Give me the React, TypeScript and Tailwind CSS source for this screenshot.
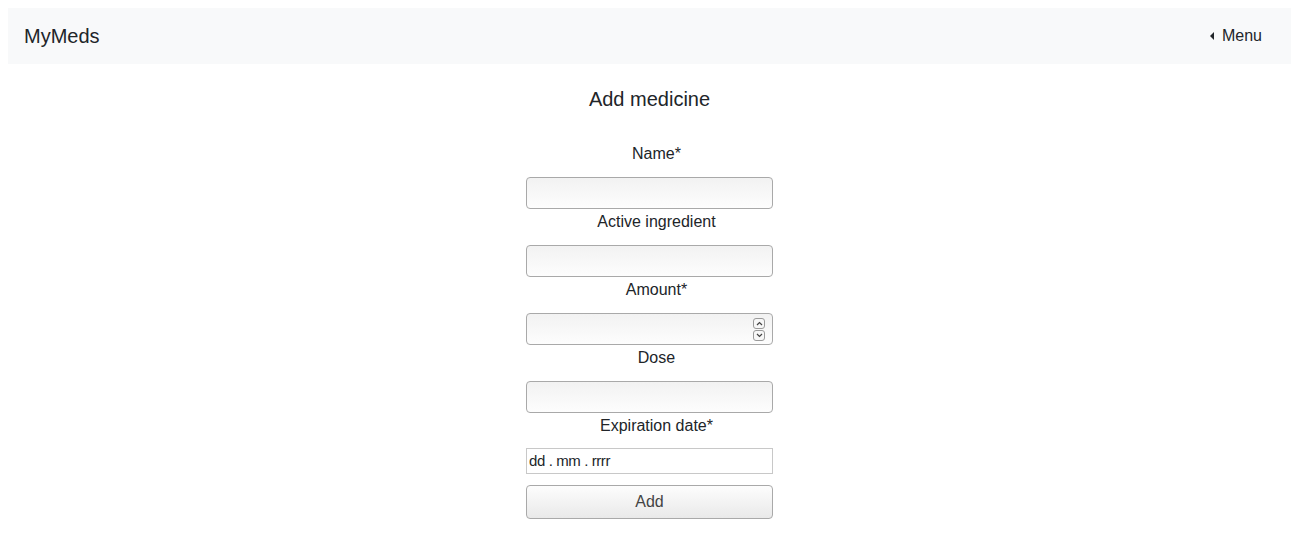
const font = { fontFamily: '"Liberation Sans", Arial, sans-serif' };

function Field({ label, children }: { label: string; children: React.ReactNode }) {
  return (
    <div className="flex flex-col items-center">
      <label className="text-base leading-6 pt-px mb-[11px] pl-[14px] text-[#212529]">{label}</label>
      {children}
    </div>
  );
}

function TextBox({ spinner }: { spinner?: boolean }) {
  return (
    <div className="relative w-[247px] h-8 rounded-[4px] border border-[#a9a9a9] bg-gradient-to-b from-[#f2f2f2] to-[#fdfdfd]">
      {spinner && (
        <div className="absolute right-[7px] top-[4px] flex flex-col gap-px">
          <Spin dir="up" />
          <Spin dir="down" />
        </div>
      )}
    </div>
  );
}

function Spin({ dir }: { dir: 'up' | 'down' }) {
  return (
    <div className="w-[12px] h-[11px] rounded-[3px] border border-[#9a9a9a] bg-[#f7f7f7] flex items-center justify-center">
      <svg width="7" height="5" viewBox="0 0 7 5">
        <path
          d={dir === 'up' ? 'M1 4 L3.5 1.5 L6 4' : 'M1 1 L3.5 3.5 L6 1'}
          fill="none"
          stroke="#444"
          strokeWidth="1.2"
        />
      </svg>
    </div>
  );
}

export default function App() {
  return (
    <div className="p-2 bg-white min-h-[537px] text-[#212529]" style={font}>
      <header className="h-14 bg-[#f8f9fa] px-4 flex items-center justify-between">
        <div className="text-xl">MyMeds</div>
        <div className="flex items-center gap-[8px] pr-[13px] text-base">
          <svg width="4" height="8" viewBox="0 0 4 8">
            <path d="M4 0 L0 4 L4 8 Z" fill="#212529" />
          </svg>
          <span>Menu</span>
        </div>
      </header>

      <h2 className="text-xl text-center mt-[23px] leading-6">Add medicine</h2>

      <div className="flex flex-col items-center mt-[30px]">
        <Field label="Name*">
          <TextBox />
        </Field>
        <Field label="Active ingredient">
          <TextBox />
        </Field>
        <Field label="Amount*">
          <TextBox spinner />
        </Field>
        <Field label="Dose">
          <TextBox />
        </Field>
        <Field label="Expiration date*">
          <div className="w-[247px] h-[26px] -mt-px border border-[#c8c8c8] bg-white flex items-center px-[2px] pt-px text-[15px] tracking-[-0.4px]">
            dd . mm . rrrr
          </div>
        </Field>
        <button className="mt-[11px] w-[247px] h-[34px] rounded-[4px] border border-[#a9a9a9] bg-gradient-to-b from-[#fdfdfd] to-[#e9e9e9] text-base text-[#444]">
          Add
        </button>
      </div>
    </div>
  );
}
